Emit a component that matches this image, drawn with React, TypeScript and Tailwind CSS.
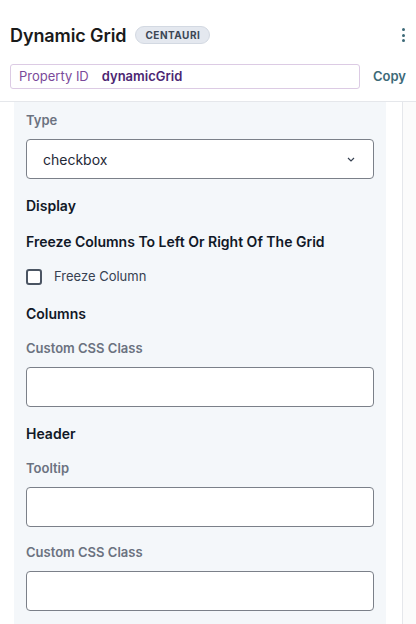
import React from "react";

function Label({ children, className = "" }: { children: React.ReactNode; className?: string }) {
  return (
    <div className={`h-[20px] flex items-center text-[13px] font-semibold text-[#6b7280] ${className}`}>
      {children}
    </div>
  );
}

function Heading({ children, className = "" }: { children: React.ReactNode; className?: string }) {
  return (
    <div className={`h-[20px] flex items-center text-[14px] font-semibold text-[#111827] ${className}`}>
      {children}
    </div>
  );
}

function TextInput({ className = "" }: { className?: string }) {
  return <div className={`h-[40px] rounded-[4px] border border-[#7b8089] bg-white ${className}`} />;
}

export default function App() {
  return (
    <div
      className="w-[416px] h-[624px] overflow-hidden bg-white flex flex-col"
      style={{ fontFamily: "Inter, 'Noto Sans', sans-serif" }}
    >
      <div className="px-[10px] border-b border-[#e5e7eb] shrink-0">
        <div className="h-[70px] pt-[24px] flex items-start">
          <div className="flex items-center h-[22px] w-full">
            <span className="text-[18px] font-semibold text-[#1a1a1a] tracking-[-0.1px]">Dynamic Grid</span>
            <span className="ml-[9px] h-[18px] px-[9px] rounded-full bg-[#e4e8ef] border border-[#d3d9e2] text-[10px] font-bold tracking-[0.5px] text-[#3c4654] flex items-center">
              CENTAURI
            </span>
            <div className="ml-auto mr-[1px] flex flex-col gap-[2.5px] items-center">
              <span className="w-[3px] h-[3px] rounded-full bg-[#3d6a78]" />
              <span className="w-[3px] h-[3px] rounded-full bg-[#3d6a78]" />
              <span className="w-[3px] h-[3px] rounded-full bg-[#3d6a78]" />
            </div>
          </div>
        </div>
        <div className="h-[37px] -mt-[6px] flex items-start">
          <div className="w-[350px] h-[25px] rounded-[3px] border border-[#dccbe4] flex items-center px-[8px]">
            <span className="text-[13px] text-[#7a4a9a]">Property ID</span>
            <span className="ml-[13px] text-[13px] font-semibold text-[#4c2673]">dynamicGrid</span>
          </div>
          <span className="ml-auto h-[25px] flex items-center text-[13px] font-semibold text-[#3d6a78]">Copy</span>
        </div>
      </div>
      <div className="flex flex-1 min-h-0">
        <div className="ml-[14px] w-[372px] bg-[#f4f7fa] px-[12px] pt-[9px] flex flex-col">
          <Label>Type</Label>
          <div className="mt-[8px] h-[40px] rounded-[4px] border border-[#7b8089] bg-white flex items-center pl-[16px] pr-[18px]">
            <span className="text-[14px] text-[#1f2937]">checkbox</span>
            <svg className="ml-auto" width="8" height="5" viewBox="0 0 8 5" fill="none">
              <path d="M1 1l3 3 3-3" stroke="#374151" strokeWidth="1.2" />
            </svg>
          </div>
          <Heading className="mt-[16px]">Display</Heading>
          <Heading className="mt-[16px]">Freeze Columns To Left Or Right Of The Grid</Heading>
          <div className="mt-[16px] h-[20px] flex items-center">
            <span className="w-[16px] h-[16px] rounded-[3px] border-2 border-[#4b5563] bg-white" />
            <span className="ml-[12px] text-[13px] text-[#374151]">Freeze Column</span>
          </div>
          <Heading className="mt-[16px]">Columns</Heading>
          <Label className="mt-[16px]">Custom CSS Class</Label>
          <TextInput className="mt-[8px]" />
          <Heading className="mt-[16px]">Header</Heading>
          <Label className="mt-[16px]">Tooltip</Label>
          <TextInput className="mt-[8px]" />
          <Label className="mt-[16px]">Custom CSS Class</Label>
          <TextInput className="mt-[8px]" />
        </div>
        <div className="w-[16px] bg-white" />
        <div className="flex-1 border-l border-[#e5e7eb] bg-[#fbfbfb]" />
      </div>
    </div>
  );
}
